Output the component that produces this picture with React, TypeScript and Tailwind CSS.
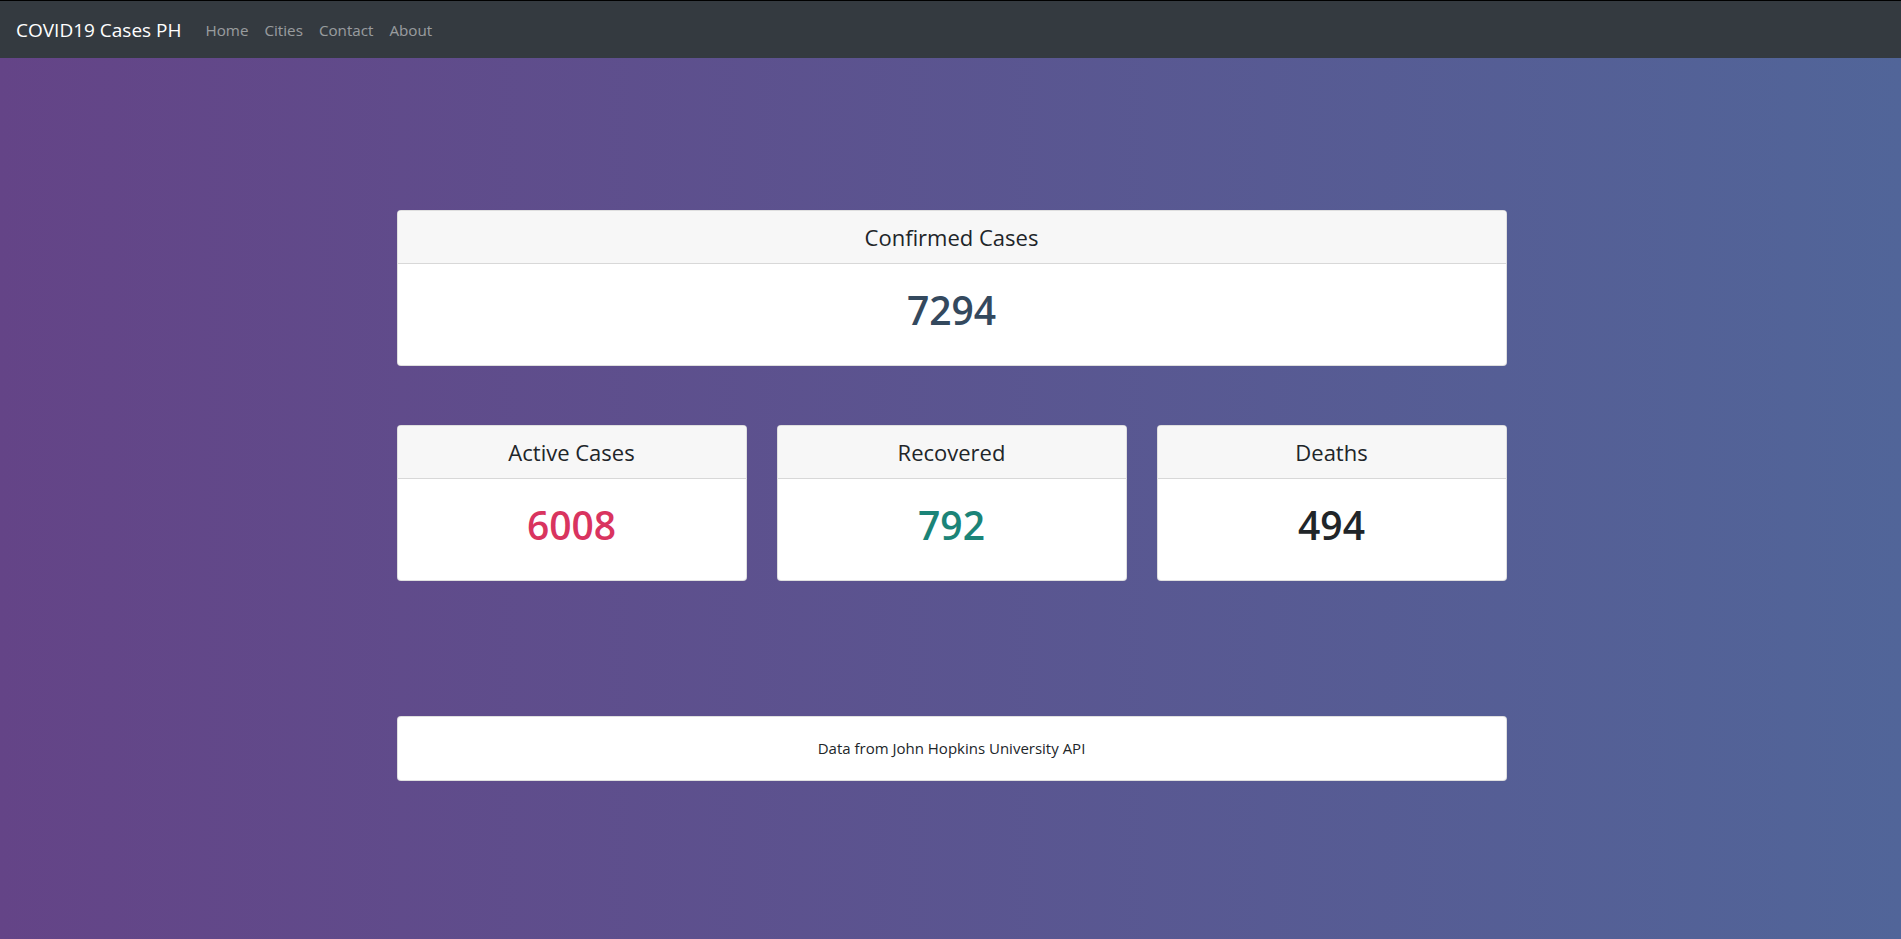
import React from "react";

function StatCard({ title, value, color }: { title: string; value: string; color: string }) {
  return (
    <div className="flex flex-col rounded-[4px] border border-black/[0.125] bg-white overflow-hidden">
      <div className="h-[53px] flex items-center justify-center bg-[#f7f7f7] border-b border-black/[0.125] text-[22px] text-[#212529]">
        {title}
      </div>
      <div className={`h-[101px] flex items-center justify-center pb-[9px] text-[39px] font-semibold ${color}`}>
        {value}
      </div>
    </div>
  );
}

export default function App() {
  return (
    <div
      className="min-h-screen w-full flex flex-col bg-[linear-gradient(to_right,#644487,#516599)]"
      style={{ fontFamily: '"Open Sans", "Noto Sans", Arial, sans-serif' }}
    >
      <nav className="h-[58px] border-t border-black bg-[#343a40] flex items-center px-4 pt-[2px]">
        <span className="text-white text-[19px] mr-4 leading-none">COVID19 Cases PH</span>
        <div className="flex items-center text-[15.2px] text-white/50">
          <span className="px-2">Home</span>
          <span className="px-2">Cities</span>
          <span className="px-2">Contact</span>
          <span className="px-2">About</span>
        </div>
      </nav>
      <main className="w-[1110px] ml-[calc(50%-554px)] flex flex-col pt-[152px]">
        <StatCard title="Confirmed Cases" value="7294" color="text-[#34495e]" />
        <div className="grid grid-cols-3 gap-[30px] mt-[59px]">
          <StatCard title="Active Cases" value="6008" color="text-[#d9345f]" />
          <StatCard title="Recovered" value="792" color="text-[#1b8478]" />
          <StatCard title="Deaths" value="494" color="text-[#212529]" />
        </div>
        <div className="mt-[135px] h-[65px] rounded-[4px] border border-black/[0.125] bg-white flex items-center justify-center text-[15px] text-[#212529]">
          Data from John Hopkins University API
        </div>
      </main>
    </div>
  );
}
